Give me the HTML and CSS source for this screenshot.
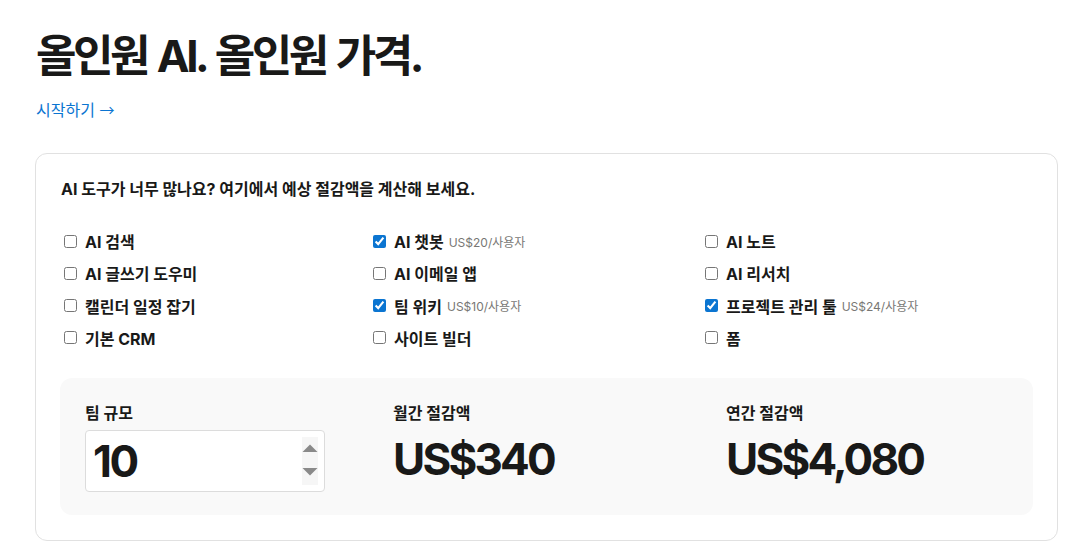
FILE: index.html
```html
<!DOCTYPE html>
<html lang="ko">
<head>
<meta charset="utf-8">
<title>올인원 AI. 올인원 가격.</title>
<link rel="stylesheet" href="styles.css">
</head>
<body>
<main class="page">
  <h1 class="title">올인원 AI. 올인원 가격.</h1>
  <a class="cta" href="#">시작하기 <span class="arrow">→</span></a>

  <section class="card">
    <h2 class="card-title">AI 도구가 너무 많나요? 여기에서 예상 절감액을 계산해 보세요.</h2>

    <div class="tools">
      <label class="tool"><input type="checkbox"><span class="name">AI 검색</span></label>
      <label class="tool"><input type="checkbox" checked><span class="name">AI 챗봇</span><span class="price">US$20/사용자</span></label>
      <label class="tool"><input type="checkbox"><span class="name">AI 노트</span></label>

      <label class="tool"><input type="checkbox"><span class="name">AI 글쓰기 도우미</span></label>
      <label class="tool"><input type="checkbox"><span class="name">AI 이메일 앱</span></label>
      <label class="tool"><input type="checkbox"><span class="name">AI 리서치</span></label>

      <label class="tool"><input type="checkbox"><span class="name">캘린더 일정 잡기</span></label>
      <label class="tool"><input type="checkbox" checked><span class="name">팀 위키</span><span class="price">US$10/사용자</span></label>
      <label class="tool"><input type="checkbox" checked><span class="name">프로젝트 관리 툴</span><span class="price">US$24/사용자</span></label>

      <label class="tool"><input type="checkbox"><span class="name">기본 CRM</span></label>
      <label class="tool"><input type="checkbox"><span class="name">사이트 빌더</span></label>
      <label class="tool"><input type="checkbox"><span class="name">폼</span></label>
    </div>

    <div class="panel">
      <div class="stat">
        <div class="stat-label">팀 규모</div>
        <div class="input">
          <span class="input-value">10</span>
          <span class="spinner">
            <svg width="16" height="48" viewBox="0 0 16 48">
              <polygon points="0.5,15 8,7.5 15.5,15" fill="#8a8a8a"/>
              <polygon points="0.5,31 15.5,31 8,38.5" fill="#8a8a8a"/>
            </svg>
          </span>
        </div>
      </div>
      <div class="stat">
        <div class="stat-label">월간 절감액</div>
        <div class="stat-value">US$340</div>
      </div>
      <div class="stat">
        <div class="stat-label">연간 절감액</div>
        <div class="stat-value">US$4,080</div>
      </div>
    </div>
  </section>
</main>
</body>
</html>
```

FILE: styles.css
```css
* { box-sizing: border-box; }

html, body {
  margin: 0;
  padding: 0;
  background: #ffffff;
}

body {
  font-family: Inter, "Noto Sans CJK KR", sans-serif;
  color: #191919;
}

.page {
  padding: 28px 29px 0 35px;
}

.title {
  margin: 0 0 0 1px;
  font-size: 44px;
  line-height: 56px;
  font-weight: 700;
  letter-spacing: -3.5px;
  word-spacing: 3px;
  color: #191918;
}

.cta {
  display: inline-block;
  margin: 14px 0 0 1px;
  font-size: 16px;
  line-height: 24px;
  color: #0b75d1;
  text-decoration: none;
}

.arrow {
  font-family: "Noto Sans CJK KR", sans-serif;
  font-size: 15px;
}

.card {
  margin-top: 31px;
  border: 1px solid #e1e1e1;
  border-radius: 12px;
  padding: 23px 24px 24px 24px;
  height: 388px;
}

.card-title {
  margin: 0 0 0 1px;
  font-size: 16px;
  line-height: 24px;
  font-weight: 700;
  color: #191918;
}

.tools {
  margin-top: 28px;
  display: grid;
  grid-template-columns: 309px 332px 1fr;
  row-gap: 8.3px;
  padding-left: 4px;
}

.tool {
  display: flex;
  align-items: center;
  height: 24px;
  font-size: 16px;
}

.tool input {
  width: 13px;
  height: 13px;
  margin: 0 8px 0 0;
  accent-color: #0b75d1;
}

.name {
  font-weight: 700;
  color: #191918;
}

.price {
  margin-left: 5px;
  font-size: 12px;
  color: #787774;
}

.panel {
  margin-top: 28px;
  background: #f9f9f9;
  border-radius: 12px;
  height: 137px;
  padding: 23px 25px;
  display: grid;
  grid-template-columns: 308px 333px 1fr;
}

.stat-label {
  font-size: 16px;
  line-height: 24px;
  font-weight: 700;
  color: #191918;
}

.input {
  margin-top: 5px;
  width: 240px;
  height: 62px;
  background: #ffffff;
  border: 1px solid #dcdcdc;
  border-radius: 4px;
  display: flex;
  align-items: center;
  justify-content: space-between;
  padding: 0 6px 0 7px;
}

.input-value {
  font-size: 44px;
  font-weight: 700;
  letter-spacing: -2.5px;
  color: #191918;
}

.spinner {
  display: flex;
  background: #f6f6f6;
  height: 48px;
  align-items: center;
}

.stat-value {
  margin-top: 3px;
  font-size: 44px;
  line-height: 62px;
  font-weight: 700;
  letter-spacing: -2.8px;
  color: #191918;
}
```
